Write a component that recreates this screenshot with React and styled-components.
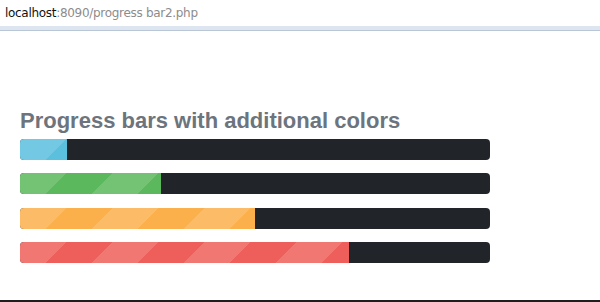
import styled, { createGlobalStyle } from 'styled-components';

const GlobalStyle = createGlobalStyle`
    html, body {
        margin: 0;
        padding: 0;
        background: #ffffff;
    }
    body {
        width: 600px;
        height: 302px;
        overflow: hidden;
        font-family: "Liberation Sans", Arial, sans-serif;
    }
`;

const Page = styled.div`
    width: 600px;
    height: 302px;
    display: flex;
    flex-direction: column;
    box-sizing: border-box;
    border-bottom: 2px solid #1e1e1e;
`;

const AddressBar = styled.div`
    height: 26px;
    padding-left: 5px;
    display: flex;
    align-items: center;
    font-family: "DejaVu Sans", "Open Sans", sans-serif;
    font-size: 12px;
    color: #8c8c8c;
    letter-spacing: -0.3px;
    border-bottom: 4px solid #dde6f0;
    box-shadow: 0 1px 0 #b9c6d6;
    b {
        font-weight: normal;
        color: #111;
    }
`;

const Content = styled.div`
    flex: 1;
    padding: 78px 0 0 20px;
`;

const Title = styled.h2`
    margin: 0 0 5px;
    font-size: 22px;
    line-height: 26px;
    font-weight: bold;
    color: #6c747d;
`;

const Stack = styled.div`
    width: 470px;
    display: flex;
    flex-direction: column;
    gap: 13.3px;
`;

const Track = styled.div`
    height: 21px;
    border-radius: 4px;
    background: #212529;
    overflow: hidden;
    display: flex;
`;

const Fill = styled.div`
    width: ${p => p.$value}%;
    background-color: ${p => p.$color};
    background-image: linear-gradient(
        135deg,
        rgba(255, 255, 255, 0.15) 25%,
        transparent 25%,
        transparent 50%,
        rgba(255, 255, 255, 0.15) 50%,
        rgba(255, 255, 255, 0.15) 75%,
        transparent 75%,
        transparent
    );
    background-size: 92px 92px;
`;

const bars = [
    { color: '#5bc0de', value: 10 },
    { color: '#5cb85c', value: 30 },
    { color: '#fbb04c', value: 50 },
    { color: '#ee5f5b', value: 70 },
];

const App = () => {
    return (
        <>
            <GlobalStyle />
            <Page>
                <AddressBar>
                    <b>localhost</b>:8090/progress bar2.php
                </AddressBar>
                <Content>
                    <Title>Progress bars with additional colors</Title>
                    <Stack>
                        {bars.map(b => (
                            <Track key={b.color}>
                                <Fill $color={b.color} $value={b.value} />
                            </Track>
                        ))}
                    </Stack>
                </Content>
            </Page>
        </>
    );
};

export default App;
